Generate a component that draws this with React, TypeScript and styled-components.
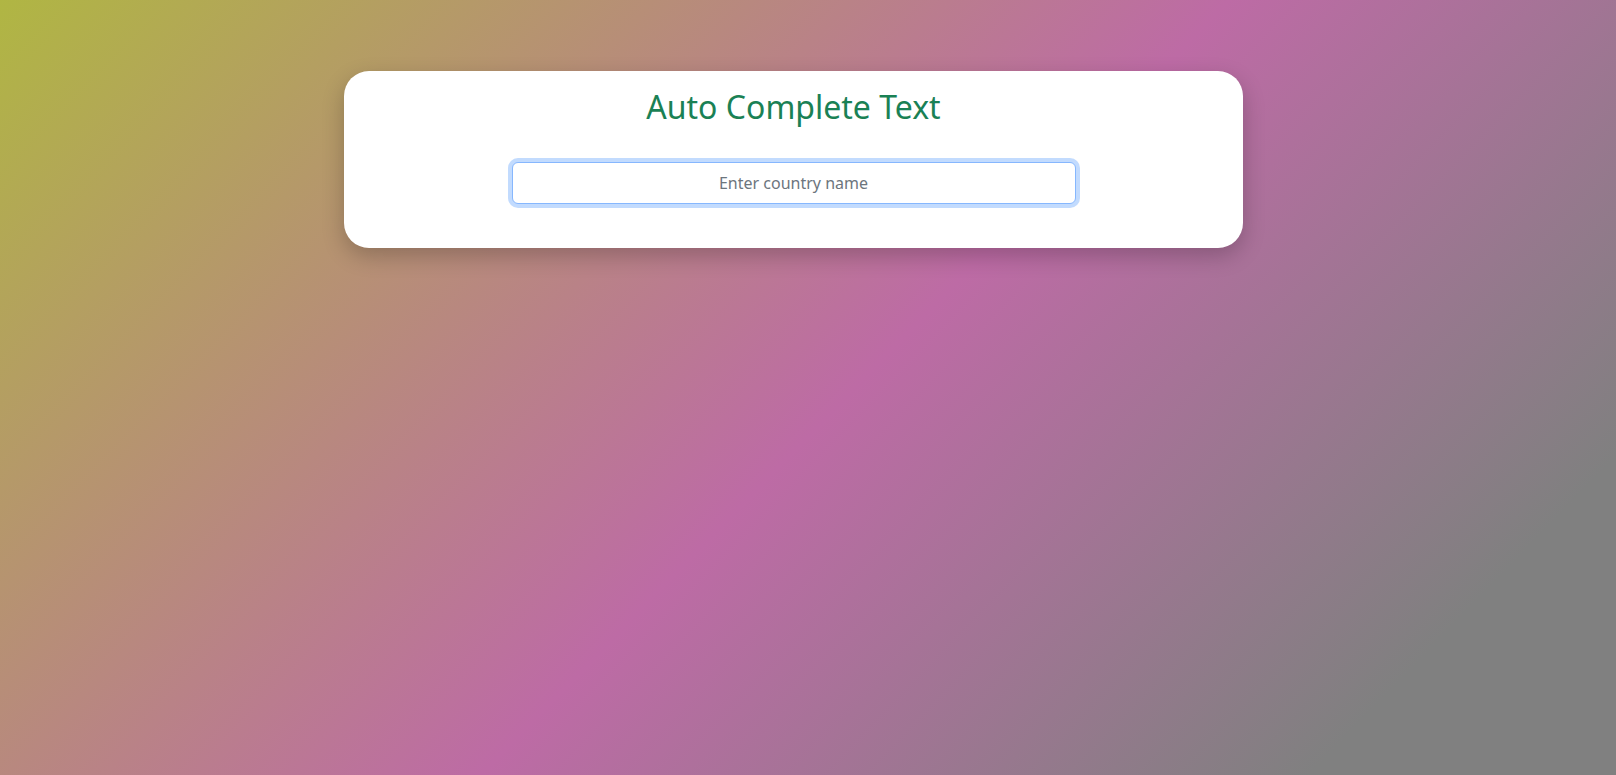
import React from "react";
import styled, { createGlobalStyle } from "styled-components";

const GlobalStyle = createGlobalStyle`
  * { box-sizing: border-box; }
  html, body { margin: 0; padding: 0; }
  body {
    min-height: 775px;
    font-family: "Noto Sans", "DejaVu Sans", sans-serif;
    background: linear-gradient(134deg, #b0b643 0%, #bd6ba5 52%, #808080 87%, #808080 100%);
    background-attachment: fixed;
  }
  #root { min-height: 775px; }
`;

const Page = styled.main`
  min-height: 775px;
  padding: 71px 373px 0 344px;
`;

const Card = styled.section`
  background: #ffffff;
  border-radius: 25px;
  box-shadow: 0 8px 22px rgba(0, 0, 0, 0.22);
  padding: 17px 20px 44px;
  display: flex;
  flex-direction: column;
  align-items: center;
`;

const Title = styled.h2`
  margin: 0 0 36px;
  font-family: "Noto Sans", "DejaVu Sans", sans-serif;
  font-size: 32px;
  font-weight: 400;
  line-height: 1.2;
  color: #1a8155;
`;

const SearchInput = styled.input`
  width: 564px;
  height: 42px;
  padding: 8px 12px;
  font-family: "Noto Sans", "DejaVu Sans", sans-serif;
  font-size: 16px;
  color: #212529;
  text-align: center;
  background: #fff;
  border: 1px solid #86b7fe;
  border-radius: 6px;
  outline: none;
  box-shadow: 0 0 0 4px rgba(13, 110, 253, 0.25);

  &::placeholder {
    color: #6c757d;
  }
`;

export default function App() {
  return (
    <>
      <GlobalStyle />
      <Page>
        <Card>
          <Title>Auto Complete Text</Title>
          <SearchInput type="text" placeholder="Enter country name" />
        </Card>
      </Page>
    </>
  );
}
